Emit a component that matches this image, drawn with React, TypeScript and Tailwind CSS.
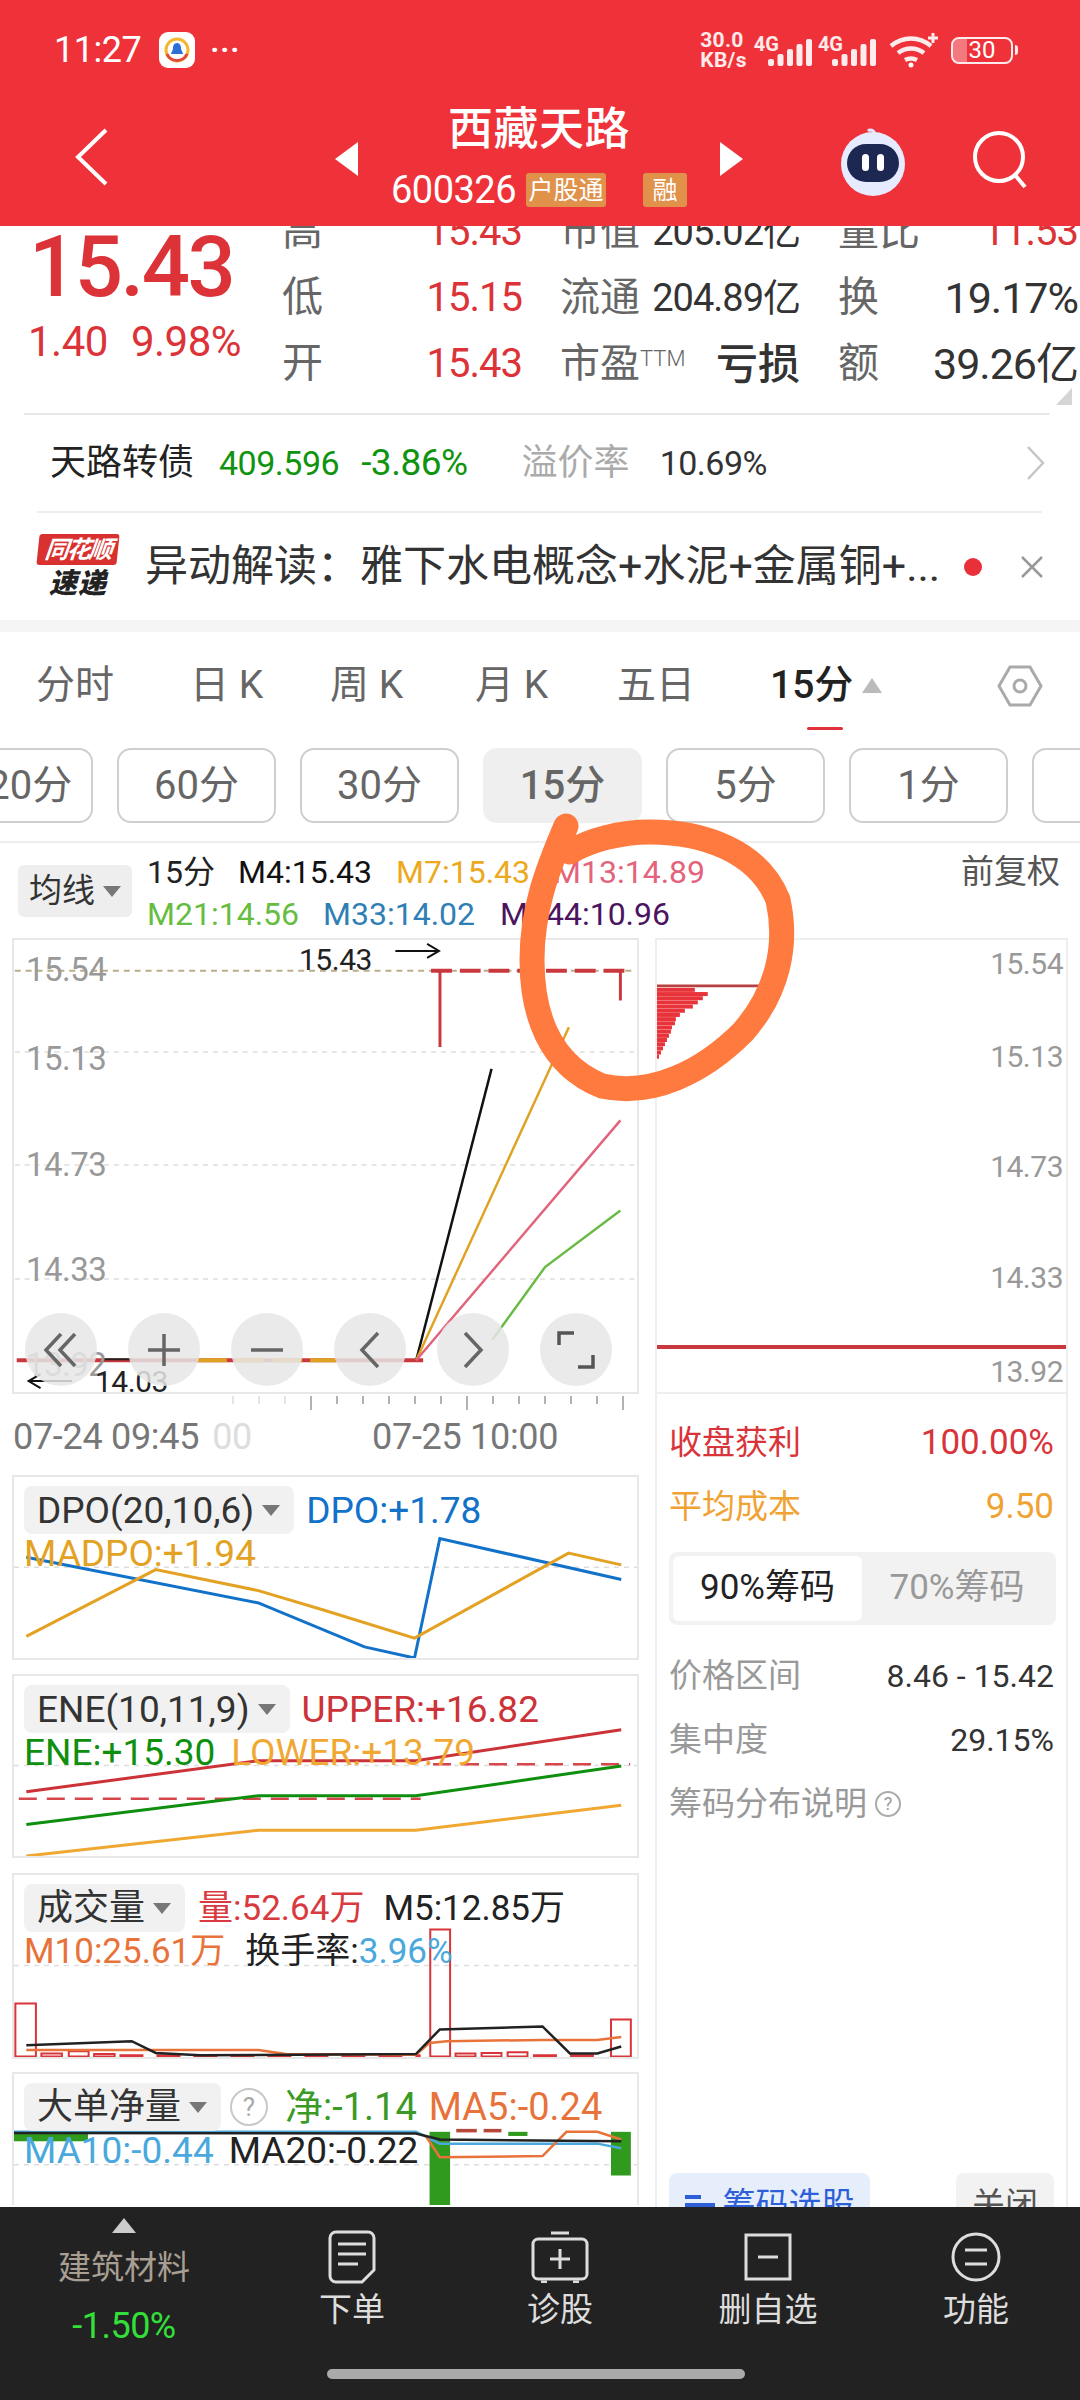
import type { ReactNode } from "react";

const RED = "text-[#dc3338]";

function Caret() {
  return <span className="ml-[8px] inline-block h-0 w-0 border-x-[9px] border-t-[11px] border-x-transparent border-t-[#777]" />;
}

function QuoteRow({ a, b, c, d, e, f }: { a: string; b: string; c: ReactNode; d: ReactNode; e: string; f: ReactNode }) {
  return (
    <div className="flex h-[66px] items-center">
      <div className="flex w-[240px] items-center justify-between">
        <span className="text-[41px] text-[#666]">{a}</span>
        <span className={`text-[40px] tracking-[-1px] ${RED}`}>{b}</span>
      </div>
      <div className="ml-[38px] flex w-[240px] items-center justify-between text-[#333]">{c}{d}</div>
      <div className="ml-[38px] flex w-[240px] items-center justify-between">
        <span className="text-[41px] text-[#666]">{e}</span>
        {f}
      </div>
    </div>
  );
}

function Poly({ points, color, width = 2.5, dash }: { points: string; color: string; width?: number; dash?: string }) {
  return <polyline points={points} fill="none" stroke={color} strokeWidth={width} strokeDasharray={dash} vectorEffect="non-scaling-stroke" />;
}

function Panel({ y, h, className, legend, children }: { y: string; h: string; className: string; legend: ReactNode; children: ReactNode }) {
  return (
    <div className={`relative overflow-hidden border-2 border-[#e8e8e8] ${className}`}>
      <svg className="absolute inset-0 h-full w-full" viewBox={`18 ${y} 910 ${h}`} preserveAspectRatio="none">
        {children}
      </svg>
      <div className="relative pl-[10px] pt-[9px]">{legend}</div>
    </div>
  );
}

function Ind({ children, size = "text-[36px]" }: { children: ReactNode; size?: string }) {
  return (
    <span className={`flex h-[48px] items-center rounded-[8px] bg-[#f0f0f0]/90 pl-[13px] pr-[14px] leading-none text-[#333] ${size}`}>
      {children}
      <Caret />
    </span>
  );
}

function Control({ children }: { children: ReactNode }) {
  return <div className="flex h-[73px] w-[72px] items-center justify-center rounded-full bg-[#e6e6e6]/85">{children}</div>;
}

function Tool({ icon, label }: { icon: ReactNode; label: string }) {
  return (
    <div className="flex flex-1 flex-col items-center pt-[22px]">
      <div className="flex h-[56px] items-center">{icon}</div>
      <span className="mt-[3px] text-[33px] leading-[44px] text-[#ddd]">{label}</span>
    </div>
  );
}

function Bars() {
  return (
    <svg width="44" height="27" viewBox="0 0 44 27" fill="white" fillOpacity="0.9" className="-ml-[11px] mt-[4px]">
      <rect y="20" width="6" height="7" rx="2" /><rect x="9.5" y="15" width="6" height="12" rx="2" /><rect x="19" y="10" width="6" height="17" rx="2" /><rect x="28.5" y="5" width="6" height="22" rx="2" /><rect x="38" width="6" height="27" rx="2" />
    </svg>
  );
}

const subTabs = ["120分", "60分", "30分", "15分", "5分", "1分", ""];
const chipWidths = [38, 51, 46, 41, 36, 28, 23, 19, 18, 15, 14, 12, 10, 8, 6, 4, 2];

export default function App() {
  return (
    <div className="relative flex h-[2400px] w-[1080px] flex-col overflow-hidden bg-white font-['Roboto','Noto_Sans_CJK_SC',sans-serif]">
      {/* header */}
      <div className="h-[226px] shrink-0 bg-[#ef3239] text-white">
        <div className="flex h-[100px] items-center pl-[54px] pr-[62px]">
          <span className="text-[36px] tracking-[-0.5px]">11:27</span>
          <div className="ml-[18px] flex h-[36px] w-[36px] items-center justify-center rounded-[9px] bg-white">
            <svg width="28" height="28" viewBox="0 0 28 28">
              <circle cx="14" cy="14" r="11" fill="none" stroke="#f2b632" strokeWidth="3" />
              <path d="M4 18a11 11 0 0 0 20 0" fill="none" stroke="#e4483f" strokeWidth="3" />
              <path d="M14 7c3 0 4 3 4 5 0 3 2 4 2 6H8c0-2 2-3 2-6 0-2 1-5 4-5z" fill="#2b6fd6" />
            </svg>
          </div>
          <span className="ml-[15px] text-[30px] font-bold leading-none tracking-[1px]">···</span>
          <div className="ml-auto flex items-center">
            <div className="text-[21px] font-bold leading-[20px] tracking-[0.3px] text-white/90">
              <div>30.0</div>
              <div>KB/s</div>
            </div>
            <div className="ml-[7px] flex items-start">
              <span className="text-[20px] font-bold leading-[18px] text-white/90">4G</span>
              <Bars />
              <span className="ml-[6px] text-[20px] font-bold leading-[18px] text-white/90">4G</span>
              <Bars />
            </div>
            <svg width="50" height="36" viewBox="0 0 50 36" className="ml-[13px]" fill="none" stroke="white" strokeOpacity="0.9" strokeWidth="4.5">
              <path d="M2 14c12-10 28-10 40 0M9 21c8-6 18-6 26 0M16 28c4-2 8-2 12 0" />
              <circle cx="22" cy="33" r="2.5" fill="white" stroke="none" />
              <path d="M44 1v10M39 6h10" strokeWidth="3" />
            </svg>
            <div className="ml-[12px] flex items-center">
              <div className="relative flex h-[27px] w-[62px] items-center justify-center overflow-hidden rounded-[8px] border-2 border-white/90 text-[24px] leading-none">
                <span className="absolute inset-y-0 left-0 w-[14px] bg-white/35" />
                <span className="relative">30</span>
              </div>
              <span className="ml-[2px] h-[10px] w-[3px] rounded-r bg-white/90" />
            </div>
          </div>
        </div>
        <div className="flex h-[126px] items-start">
          <div className="flex w-[335px] items-center pl-[72px] pt-[27px]">
            <svg width="38" height="60" viewBox="0 0 38 60" fill="none" stroke="white" strokeWidth="4">
              <path d="M34 3L6 30l28 27" />
            </svg>
          </div>
          <div className="flex w-[408px] items-start justify-between pt-[42px]">
            <span className="h-0 w-0 border-y-[17px] border-r-[23px] border-y-transparent border-r-white" />
            <span className="h-0 w-0 border-y-[17px] border-l-[23px] border-y-transparent border-l-white" />
          </div>
          <div className="flex items-center pl-[96px] pt-[26px]">
            <svg width="68" height="70" viewBox="0 0 68 70">
              <path d="M36 8c-1-4-5-5-7-3" fill="none" stroke="#dfe6ff" strokeWidth="3" />
              <circle cx="34" cy="38" r="32" fill="#e6ebff" />
              <rect x="8" y="18" width="52" height="38" rx="19" fill="#1c2752" />
              <rect x="23" y="28" width="7" height="17" rx="3.5" fill="white" />
              <rect x="38" y="28" width="7" height="17" rx="3.5" fill="white" />
            </svg>
            <svg width="60" height="64" viewBox="0 0 60 64" className="-mt-[5px] ml-[64px]" fill="none" stroke="white" strokeWidth="4">
              <circle cx="28" cy="30" r="24" />
              <path d="M44 48l10 12" />
            </svg>
          </div>
        </div>
      </div>
      <div className="absolute left-[335px] top-[103px] flex w-[408px] flex-col items-center text-white">
        <span className="text-[45px] font-medium leading-[54px] tracking-[0.5px]">西藏天路</span>
        <div className="mt-[15px] flex h-[36px] items-center">
          <span className="text-[38px] tracking-[-0.5px]">600326</span>
          <span className="ml-[10px] flex h-[34px] w-[80px] items-center justify-center rounded-[3px] bg-[#e0914a] text-[25px] leading-none">户股通</span>
          <span className="ml-[37px] flex h-[34px] w-[44px] items-center justify-center rounded-[3px] bg-[#e0914a] text-[25px] leading-none">融</span>
        </div>
      </div>

      {/* quote */}
      <div className="relative flex h-[187px] shrink-0 overflow-hidden">
        <div className="w-[282px] shrink-0 pl-[29px]">
          <div className={`mt-[-1px] text-[85px] font-medium leading-[84px] tracking-[-2.5px] ${RED}`}>15.43</div>
          <div className={`mt-[8px] flex text-[42px] leading-[50px] tracking-[-0.5px] ${RED}`}>
            <span className="-ml-[1px]">1.40</span>
            <span className="ml-[23px]">9.98%</span>
          </div>
        </div>
        <div className="mt-[-27px]">
          <QuoteRow a="高" b="15.43" c={<span className="text-[40px] text-[#666]">市值</span>} d={<span className="text-[38px] tracking-[-1px]">205.02亿</span>} e="量比" f={<span className={`text-[40px] tracking-[-1px] ${RED}`}>11.53</span>} />
          <QuoteRow a="低" b="15.15" c={<span className="text-[40px] text-[#666]">流通</span>} d={<span className="text-[38px] tracking-[-1px]">204.89亿</span>} e="换" f={<span className="text-[43px] tracking-[-1px] text-[#333]">19.17%</span>} />
          <QuoteRow a="开" b="15.43" c={<span className="text-[40px] text-[#666]">市盈<sup className="text-[22px] font-light">TTM</sup></span>} d={<span className="text-[42px] font-medium">亏损</span>} e="额" f={<span className="text-[43px] tracking-[-1px] text-[#333]">39.26亿</span>} />
        </div>
        <span className="absolute bottom-[8px] right-[8px] h-0 w-0 border-b-[17px] border-l-[16px] border-b-[#d5d5d5] border-l-transparent" />
      </div>

      <div className="mx-[24px] h-[2px] w-[1026px] shrink-0 bg-[#e8e8e8]" />
      <div className="flex h-[96px] shrink-0 items-center pl-[50px]">
        <span className="text-[36px] text-[#222]">天路转债</span>
        <span className="ml-[25px] text-[34px] tracking-[-0.5px] text-[#109410]">409.596</span>
        <span className="ml-[22px] text-[37px] tracking-[-0.5px] text-[#109410]">-3.86%</span>
        <span className="ml-[54px] text-[36px] text-[#aaa]">溢价率</span>
        <span className="ml-[30px] text-[34px] tracking-[-0.5px] text-[#333]">10.69%</span>
        <svg width="20" height="36" viewBox="0 0 20 36" className="ml-auto mr-[34px]" fill="none" stroke="#c5c5c5" strokeWidth="2.5">
          <path d="M2 2l15 16L2 34" />
        </svg>
      </div>
      <div className="mx-[37px] h-[2px] w-[1005px] shrink-0 bg-[#eeeeee]" />
      <div className="flex h-[107px] shrink-0 items-center pl-[38px]">
        <div className="flex w-[80px] flex-col items-center">
          <span className="flex h-[31px] w-[80px] -skew-x-6 items-center justify-center rounded-[3px] bg-[#d9312f] text-[24px] font-bold italic leading-none tracking-[-2px] text-white">同花顺</span>
          <span className="mt-[3px] text-[28px] font-black italic leading-[32px] tracking-[1px] text-[#222]">速递</span>
        </div>
        <span className="ml-[27px] w-[800px] whitespace-nowrap text-[43px] text-[#333]">异动解读：雅下水电概念+水泥+金属铜+...</span>
        <span className="ml-[19px] h-[18px] w-[18px] rounded-full bg-[#e8303a]" />
        <svg width="24" height="24" viewBox="0 0 24 24" className="ml-[38px]" fill="none" stroke="#999" strokeWidth="2.5">
          <path d="M2 2l20 20M22 2L2 22" />
        </svg>
      </div>
      <div className="h-[12px] shrink-0 bg-[#f5f5f5]" />

      {/* period tabs */}
      <div className="flex h-[98px] shrink-0 pl-[36px] text-[39px] text-[#666]">
        <span className="mt-[24px] w-[154px]">分时</span>
        <span className="mt-[24px] w-[140px]">日 K</span>
        <span className="mt-[24px] w-[145px]">周 K</span>
        <span className="mt-[24px] w-[142px]">月 K</span>
        <span className="mt-[24px] w-[153px]">五日</span>
        <div className="flex flex-col">
          <div className="mt-[24px] flex items-center">
            <span className="font-medium text-[#222]">15分</span>
            <span className="ml-[9px] h-0 w-0 border-x-[10px] border-b-[15px] border-x-transparent border-b-[#bbb]" />
          </div>
          <span className="ml-[37px] mt-[12px] h-[8px] w-[36px] rounded-full bg-[#e0313a]" />
        </div>
        <svg width="46" height="46" viewBox="0 0 46 46" className="ml-[115px] mt-[31px]" fill="none" stroke="#aaa" strokeWidth="3">
          <path d="M13 4h20l11 19-11 19H13L2 23z" />
          <circle cx="23" cy="23" r="6" />
        </svg>
      </div>
      <div className="flex h-[113px] shrink-0 overflow-hidden border-b-2 border-[#eeeeee] pt-[18px]">
        <div className="-ml-[66px] flex gap-[24px]">
          {subTabs.map((t) => (
            <div key={t} className={`flex h-[75px] w-[159px] shrink-0 items-center justify-center rounded-[14px] border-2 text-[40px] text-[#666] ${t === "15分" ? "border-[#efefef] bg-[#efefef] font-medium" : "border-[#cfcfcf]"} ${t === "120分" ? "pl-[10px]" : ""}`}>
              {t}
            </div>
          ))}
        </div>
      </div>

      {/* ma legend */}
      <div className="flex h-[95px] shrink-0 text-[32px] leading-[42px]">
        <div className="ml-[18px] mt-[22px] flex h-[52px] w-[114px] items-center justify-center rounded-[6px] bg-[#eeeeee] text-[33px] text-[#333]">
          均线<Caret />
        </div>
        <div className="ml-[15px] mt-[8px]">
          <div className="flex">
            <span className="w-[91px] text-[#222]">15分</span>
            <span className="w-[158px] text-[#111]">M4:15.43</span>
            <span className="w-[157px] text-[#eda91d]">M7:15.43</span>
            <span className="text-[#e4637c]">M13:14.89</span>
          </div>
          <div className="flex">
            <span className="w-[176px] text-[#66bd3f]">M21:14.56</span>
            <span className="w-[177px] text-[#2f7fb5]">M33:14.02</span>
            <span className="text-[#4b1360]">M144:10.96</span>
          </div>
        </div>
        <span className="ml-auto mr-[20px] mt-[8px] text-[33px] text-[#555]">前复权</span>
      </div>

      <div className="flex min-h-0 flex-1">
        {/* left charts */}
        <div className="ml-[12px] flex w-[627px] shrink-0 flex-col">
          <div className="relative h-[456px] shrink-0 border-2 border-[#e8e8e8]">
            <svg className="absolute inset-0 h-full w-full" viewBox="12 940 627 456">
              <line x1="12" y1="971" x2="639" y2="971" stroke="#b9ad8a" strokeWidth="2" strokeDasharray="6 5" />
              {[1053, 1167, 1282].map((y) => (
                <line key={y} x1="12" y1={y} x2="639" y2={y} stroke="#dedede" strokeWidth="1.5" strokeDasharray="5 5" />
              ))}
              <line x1="432" y1="971" x2="633" y2="971" stroke="#c8383c" strokeWidth="4" strokeDasharray="21 8" />
              <line x1="441" y1="971" x2="441" y2="1048" stroke="#c8383c" strokeWidth="3" />
              <line x1="623" y1="971" x2="623" y2="1001" stroke="#c8383c" strokeWidth="3" />
              <line x1="14" y1="1364" x2="424" y2="1364" stroke="#c8383c" strokeWidth="4" />
              <line x1="196" y1="1364" x2="336" y2="1364" stroke="#e0a222" strokeWidth="4" strokeDasharray="30 8" />
              <line x1="100" y1="1363" x2="130" y2="1363" stroke="#222" strokeWidth="2" />
              <polyline points="417,1364 493,1070" fill="none" stroke="#111" strokeWidth="2.5" />
              <polyline points="417,1364 571,1028" fill="none" stroke="#e0a222" strokeWidth="2.5" />
              <polyline points="417,1364 623,1122" fill="none" stroke="#e0647c" strokeWidth="2.5" />
              <polyline points="494,1343 547,1270 623,1213" fill="none" stroke="#6abb45" strokeWidth="2.5" />
              <path d="M396 951h44m-12-7l12 7-12 7" fill="none" stroke="#111" strokeWidth="2" />
              <path d="M70 1385H26m12-7l-12 7 12 7" fill="none" stroke="#111" strokeWidth="2" />
            </svg>
            <span className="absolute left-[12px] top-[10px] text-[33px] leading-[40px] tracking-[-0.5px] text-[#999]">15.54</span>
            <span className="absolute left-[12px] top-[99px] text-[33px] leading-[40px] tracking-[-0.5px] text-[#999]">15.13</span>
            <span className="absolute left-[12px] top-[205px] text-[33px] leading-[40px] tracking-[-0.5px] text-[#999]">14.73</span>
            <span className="absolute left-[12px] top-[310px] text-[33px] leading-[40px] tracking-[-0.5px] text-[#999]">14.33</span>
            <span className="absolute left-[12px] top-[405px] text-[33px] leading-[40px] tracking-[-0.5px] text-[#999]">13.92</span>
            <span className="absolute left-[285px] top-[2px] text-[30px] leading-[36px] tracking-[-0.5px] text-[#222]">15.43</span>
            <span className="absolute left-[81px] top-[424px] text-[30px] leading-[36px] tracking-[-0.5px] text-[#222]">14.03</span>
            <div className="absolute left-[11px] top-[373px] flex gap-[31px]">
              <Control><svg width="40" height="40" viewBox="0 0 40 40" fill="none" stroke="#666" strokeWidth="3.5"><path d="M20 4L5 20l15 16M34 4L19 20l15 16" /></svg></Control>
              <Control><svg width="36" height="36" viewBox="0 0 36 36" fill="none" stroke="#666" strokeWidth="3.5"><path d="M18 2v32M2 18h32" /></svg></Control>
              <Control><svg width="36" height="36" viewBox="0 0 36 36" fill="none" stroke="#666" strokeWidth="3.5"><path d="M2 18h32" /></svg></Control>
              <Control><svg width="22" height="38" viewBox="0 0 22 38" fill="none" stroke="#666" strokeWidth="3.5"><path d="M19 2L3 19l16 17" /></svg></Control>
              <Control><svg width="22" height="38" viewBox="0 0 22 38" fill="none" stroke="#666" strokeWidth="3.5"><path d="M3 2l16 17L3 36" /></svg></Control>
              <Control><svg width="38" height="38" viewBox="0 0 38 38" fill="none" stroke="#555" strokeWidth="3.5"><path d="M2 14V2h15M36 24v12H21" /></svg></Control>
            </div>
          </div>
          <div className="relative h-[81px] shrink-0">
            <svg className="absolute left-0 top-0" width="627" height="16" viewBox="12 1395 627 16">
              {[233, 259, 285, 311, 337, 363, 389, 415, 441, 467, 493, 519, 545, 571, 597, 623].map((x) => (
                <line key={x} x1={x} y1="1397" x2={x} y2={x === 311 || x === 467 || x === 623 ? 1411 : 1405} stroke={x < 290 ? "#ddd" : "#999"} strokeWidth="1.5" />
              ))}
            </svg>
            <div className="flex whitespace-nowrap pt-[22px] text-[36px] leading-[42px] tracking-[-0.3px] text-[#777]">
              <span className="ml-[1px]">07-24 09:45</span>
              <span className="ml-[13px] text-[#ddd]">00</span>
              <span className="ml-[120px]">07-25 10:00</span>
            </div>
          </div>
          <Panel
            y="28"
            h="309"
            className="h-[185px] shrink-0"
            legend={
              <>
                <div className="flex items-center">
                  <Ind size="text-[37px]">DPO(20,10,6)</Ind>
                  <span className="ml-[12px] text-[37px] leading-none text-[#1272c9]">DPO:+1.78</span>
                </div>
                <div className="text-[37px] leading-[40px] text-[#e3a223]">MADPO:+1.94</div>
              </>
            }
          >
            <line x1="18" y1="182" x2="928" y2="182" stroke="#ddd" strokeWidth="1.5" strokeDasharray="5 5" vectorEffect="non-scaling-stroke" />
            <Poly points="36,165 375,243 530,318 603,337 640,133 905,203" color="#1272c9" width={3} />
            <Poly points="36,300 225,186 375,222 470,255 603,303 828,158 905,178" color="#e3a223" width={3} />
          </Panel>
          <div className="h-[14px] shrink-0" />
          <Panel
            y="360"
            h="308"
            className="h-[184px] shrink-0"
            legend={
              <>
                <div className="flex items-center">
                  <Ind size="text-[37px]">ENE(10,11,9)</Ind>
                  <span className="ml-[12px] text-[37px] leading-none text-[#cc3338]">UPPER:+16.82</span>
                </div>
                <div className="flex text-[37px] leading-[40px]">
                  <span className="text-[#0e8f0e]">ENE:+15.30</span>
                  <span className="ml-[16px] text-[#f0a833]">LOWER:+13.79</span>
                </div>
              </>
            }
          >
            <line x1="18" y1="513" x2="928" y2="513" stroke="#ddd" strokeWidth="1.5" strokeDasharray="5 5" vectorEffect="non-scaling-stroke" />
            <line x1="25" y1="570" x2="612" y2="570" stroke="#d6474c" strokeWidth="2.5" strokeDasharray="18 10" vectorEffect="non-scaling-stroke" />
            <line x1="630" y1="511" x2="918" y2="511" stroke="#d6474c" strokeWidth="2.5" strokeDasharray="18 10" vectorEffect="non-scaling-stroke" />
            <Poly points="36,558 375,505 605,505 905,452" color="#cc3338" width={3} />
            <Poly points="36,614 375,565 605,565 905,514" color="#0e8f0e" width={3} />
            <Poly points="36,668 375,624 605,624 905,581" color="#f0a833" width={3} />
          </Panel>
          <div className="h-[15px] shrink-0" />
          <Panel
            y="692"
            h="310"
            className="h-[186px] shrink-0"
            legend={
              <>
                <div className="flex items-center">
                  <Ind>成交量</Ind>
                  <span className="ml-[13px] text-[35px] leading-none text-[#d93a3f]">量:52.64万</span>
                  <span className="ml-[19px] text-[35px] leading-none text-[#222]">M5:12.85万</span>
                </div>
                <div className="flex text-[35px] leading-[40px]">
                  <span className="text-[#e8733a]">M10:25.61万</span>
                  <span className="ml-[20px] text-[#222]">换手率:</span>
                  <span className="text-[#4aa8dc]">3.96%</span>
                </div>
              </>
            }
          >
            <line x1="18" y1="846" x2="928" y2="846" stroke="#ddd" strokeWidth="1.5" strokeDasharray="5 5" vectorEffect="non-scaling-stroke" />
            <g fill="none" stroke="#d9343a" strokeWidth="2">
              <rect x="20" y="911" width="30" height="90" vectorEffect="non-scaling-stroke" />
              <rect x="626" y="785" width="29" height="216" vectorEffect="non-scaling-stroke" />
              <rect x="890" y="938" width="29" height="63" vectorEffect="non-scaling-stroke" />
              <rect x="58" y="996" width="30" height="5" vectorEffect="non-scaling-stroke" />
              <rect x="98" y="992" width="29" height="9" vectorEffect="non-scaling-stroke" />
              <rect x="135" y="997" width="30" height="4" vectorEffect="non-scaling-stroke" />
              <rect x="663" y="996" width="29" height="5" vectorEffect="non-scaling-stroke" />
              <rect x="701" y="995" width="29" height="6" vectorEffect="non-scaling-stroke" />
              <rect x="739" y="994" width="29" height="7" vectorEffect="non-scaling-stroke" />
            </g>
            <line x1="172" y1="1000" x2="612" y2="1000" stroke="#d9343a" strokeWidth="3" strokeDasharray="24 13" vectorEffect="non-scaling-stroke" />
            <line x1="776" y1="1000" x2="884" y2="1000" stroke="#d9343a" strokeWidth="3" strokeDasharray="24 13" vectorEffect="non-scaling-stroke" />
            <Poly points="36,990 375,990 415,997 605,998 625,978 650,975 790,973 870,973 905,968" color="#e8733a" />
            <Poly points="36,982 190,975 225,995 290,999 605,997 640,955 790,950 830,996 870,996 905,984" color="#222" />
          </Panel>
          <div className="h-[13px] shrink-0" />
          <Panel
            y="1024"
            h="222"
            className="h-[133px] shrink-0 border-b-0"
            legend={
              <>
                <div className="flex items-center">
                  <Ind>大单净量</Ind>
                  <span className="ml-[9px] flex h-[38px] w-[38px] items-center justify-center rounded-full border-2 border-[#c8c8c8] text-[26px] leading-none text-[#aaa]">?</span>
                  <span className="ml-[17px] text-[38px] leading-none text-[#3a9a25]">净:-1.14</span>
                  <span className="ml-[12px] text-[38px] leading-none text-[#e8733a]">MA5:-0.24</span>
                </div>
                <div className="flex text-[37px] leading-[40px]">
                  <span className="text-[#4aa8dc]">MA10:-0.44</span>
                  <span className="ml-[15px] text-[#222]">MA20:-0.22</span>
                </div>
              </>
            }
          >
            <line x1="18" y1="1178" x2="928" y2="1178" stroke="#ddd" strokeWidth="1.5" strokeDasharray="5 5" vectorEffect="non-scaling-stroke" />
            <g fill="#2f9a1e">
              <rect x="18" y="1122" width="108" height="16" />
              <rect x="625" y="1122" width="30" height="124" />
              <rect x="890" y="1122" width="29" height="74" />
              <rect x="740" y="1122" width="28" height="7" />
            </g>
            <g fill="#b5483a">
              <rect x="664" y="1117" width="30" height="6" />
              <rect x="704" y="1117" width="26" height="6" />
            </g>
            <Poly points="18,1122 605,1122 620,1130 640,1142 870,1142 905,1150" color="#4aa8dc" />
            <Poly points="620,1130 640,1165 790,1163 825,1122 870,1122 905,1135" color="#e8733a" />
            <Poly points="18,1124 605,1125 640,1135 905,1138" color="#222" />
          </Panel>
        </div>

        {/* right chip column */}
        <div className="ml-[16px] flex w-[413px] shrink-0 flex-col border-x-2 border-[#eeeeee]">
          <div className="relative h-[456px] shrink-0 border-y-2 border-[#eeeeee]">
            <svg className="absolute inset-0 h-full w-full" viewBox="655 940 411 452">
              <path d="M655 985H766" stroke="#b84040" strokeWidth="3" fill="none" />
              {chipWidths.map((w, i) => (
                <rect key={i} x="655" y={987 + i * 4.2} width={w} height="4" fill="#e8333a" />
              ))}
              <path d="M655 1348H1067" stroke="#c8383c" strokeWidth="4" fill="none" />
            </svg>
            <span className="absolute right-[3px] top-[6px] text-[30px] leading-[36px] tracking-[-0.5px] text-[#999]">15.54</span>
            <span className="absolute right-[3px] top-[99px] text-[30px] leading-[36px] tracking-[-0.5px] text-[#999]">15.13</span>
            <span className="absolute right-[3px] top-[209px] text-[30px] leading-[36px] tracking-[-0.5px] text-[#999]">14.73</span>
            <span className="absolute right-[3px] top-[320px] text-[30px] leading-[36px] tracking-[-0.5px] text-[#999]">14.33</span>
            <span className="absolute right-[3px] top-[414px] text-[30px] leading-[36px] tracking-[-0.5px] text-[#999]">13.92</span>
          </div>
          <div className="flex flex-1 flex-col px-[12px]">
            <div className="mt-[27px] flex items-center justify-between leading-[44px] text-[#d9343a]">
              <span className="text-[33px]">收盘获利</span>
              <span className="text-[35px]">100.00%</span>
            </div>
            <div className="mt-[20px] flex items-center justify-between leading-[44px] text-[#f0a233]">
              <span className="text-[33px]">平均成本</span>
              <span className="text-[35px]">9.50</span>
            </div>
            <div className="mt-[23px] flex h-[73px] w-[387px] rounded-[8px] bg-[#f2f2f2] p-[4px] text-[35px]">
              <span className="flex w-[189px] items-center justify-center rounded-[6px] bg-white text-[#222]">90%筹码</span>
              <span className="flex flex-1 items-center justify-center text-[#999]">70%筹码</span>
            </div>
            <div className="mt-[29px] flex items-center justify-between leading-[44px]">
              <span className="text-[33px] text-[#999]">价格区间</span>
              <span className="text-[32px] text-[#333]">8.46 - 15.42</span>
            </div>
            <div className="mt-[20px] flex items-center justify-between leading-[44px]">
              <span className="text-[33px] text-[#999]">集中度</span>
              <span className="text-[32px] text-[#333]">29.15%</span>
            </div>
            <div className="mt-[20px] flex items-center text-[33px] leading-[44px] text-[#999]">
              筹码分布说明
              <span className="ml-[8px] flex h-[26px] w-[26px] items-center justify-center rounded-full border-2 border-[#aaa] text-[18px] leading-none">?</span>
            </div>
            <div className="mt-auto flex h-[34px] justify-between overflow-hidden">
              <div className="flex h-[60px] w-[201px] items-start justify-center rounded-t-[8px] bg-[#e6eefb] pt-[12px] text-[33px] leading-[40px] text-[#2e5fd8]">
                <svg width="30" height="24" viewBox="0 0 30 24" className="mr-[8px] mt-[10px]" fill="#2e5fd8"><rect width="16" height="4" /><rect y="8" width="30" height="4" /></svg>
                筹码选股
              </div>
              <div className="flex h-[60px] w-[98px] items-start justify-center rounded-t-[8px] bg-[#f2f2f2] pt-[12px] text-[33px] leading-[40px] text-[#555]">关闭</div>
            </div>
          </div>
        </div>
      </div>

      {/* bottom toolbar */}
      <div className="relative flex h-[193px] shrink-0 bg-[#222222]">
        <div className="flex w-[248px] flex-col items-center pt-[11px]">
          <span className="h-0 w-0 border-x-[12px] border-b-[15px] border-x-transparent border-b-[#ccc]" />
          <span className="mt-[13px] text-[33px] leading-[44px] text-[#a89e92]">建筑材料</span>
          <span className="mt-[14px] text-[36px] leading-[44px] tracking-[-0.5px] text-[#33e03a]">-1.50%</span>
        </div>
        <Tool label="下单" icon={
          <svg width="48" height="54" viewBox="0 0 48 54" fill="none" stroke="#ddd" strokeWidth="3">
            <path d="M8 2h32a6 6 0 0 1 6 6v32L34 52H8a6 6 0 0 1-6-6V8a6 6 0 0 1 6-6z" />
            <path d="M10 14h28M10 24h28M10 34h20" />
          </svg>
        } />
        <Tool label="诊股" icon={
          <svg width="58" height="52" viewBox="0 0 58 52" fill="none" stroke="#ddd" strokeWidth="3">
            <rect x="2" y="8" width="54" height="40" rx="5" />
            <path d="M20 2h18M29 18v20M19 28h20" />
            <path d="M10 51h6M42 51h6" />
          </svg>
        } />
        <Tool label="删自选" icon={
          <svg width="48" height="48" viewBox="0 0 48 48" fill="none" stroke="#ddd" strokeWidth="3">
            <rect x="2" y="2" width="44" height="44" />
            <path d="M14 24h20" />
          </svg>
        } />
        <Tool label="功能" icon={
          <svg width="50" height="50" viewBox="0 0 50 50" fill="none" stroke="#ddd" strokeWidth="3">
            <circle cx="25" cy="25" r="23" />
            <path d="M14 18h22M14 32h22" />
          </svg>
        } />
        <span className="absolute bottom-[21px] left-[327px] h-[10px] w-[418px] rounded-full bg-[#aaaaaa]" />
      </div>

      {/* hand-drawn ring on top of the screenshot */}
      <svg className="pointer-events-none absolute inset-0" width="1080" height="2400" viewBox="0 0 1080 2400" fill="none">
        <path d="M566 826C547 870 532 910 532 960C532 1012 548 1064 602 1086C652 1097 703 1072 743 1032C778 992 788 945 778 900C758 850 702 832 650 832C620 832 590 840 570 852" stroke="#ff7a3e" strokeWidth="25" strokeLinecap="round" />
      </svg>
    </div>
  );
}
